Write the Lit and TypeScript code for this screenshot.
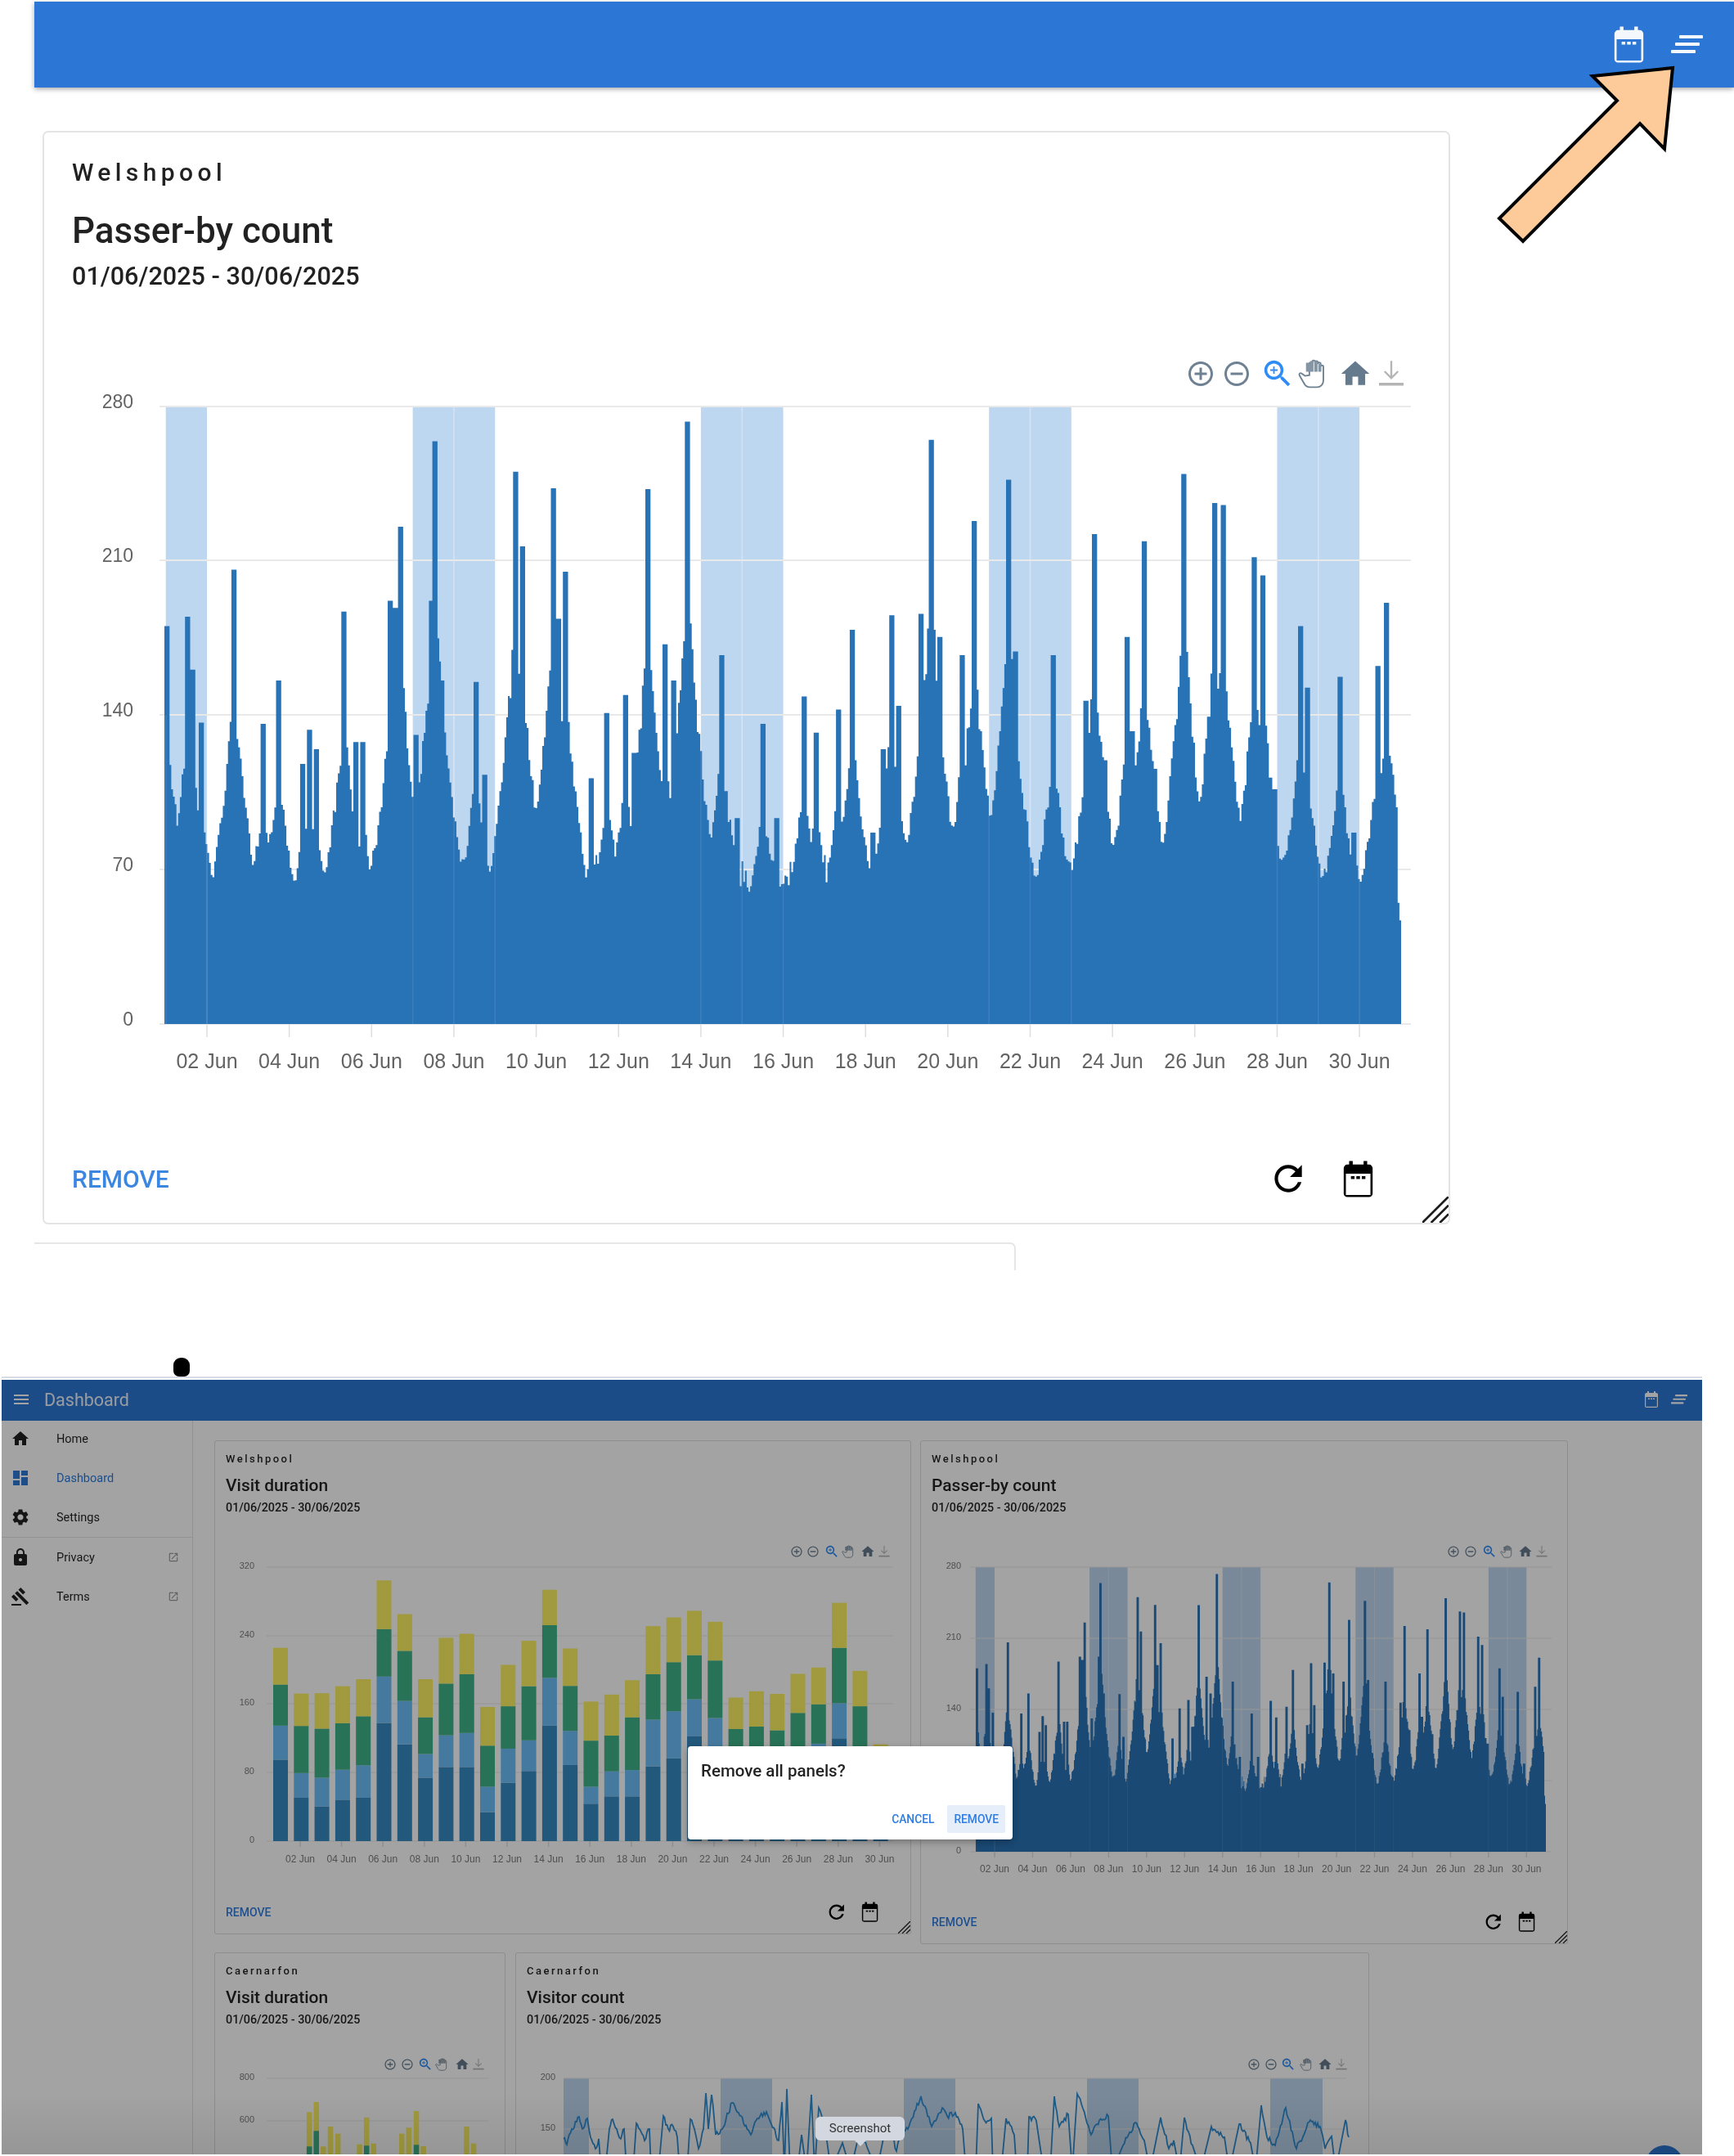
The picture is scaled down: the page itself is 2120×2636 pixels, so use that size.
import { LitElement, css, html, svg } from "lit";
import { customElement, property } from "lit/decorators.js";
import { classMap } from "lit/directives/class-map.js";

const ICONS: Record<string, string> = {
  menu: "M3 18h18v-2H3v2zm0-5h18v-2H3v2zm0-7v2h18V6H3z",
  home: "M10 20v-6h4v6h5v-8h3L12 3 2 12h3v8z",
  dashboard: "M3 13h8V3H3v10zm0 8h8v-6H3v6zm10 0h8V11h-8v10zm0-18v6h8V3h-8z",
  settings:
    "M19.14 12.94c.04-.3.06-.61.06-.94 0-.32-.02-.64-.07-.94l2.03-1.58c.18-.14.23-.41.12-.61l-1.92-3.32c-.12-.22-.37-.29-.59-.22l-2.39.96c-.5-.38-1.03-.7-1.62-.94l-.36-2.54c-.04-.24-.24-.41-.48-.41h-3.84c-.24 0-.43.17-.47.41l-.36 2.54c-.59.24-1.13.57-1.62.94l-2.39-.96c-.22-.08-.47 0-.59.22L2.74 8.87c-.12.21-.08.47.12.61l2.03 1.58c-.05.3-.09.63-.09.94s.02.64.07.94l-2.03 1.58c-.18.14-.23.41-.12.61l1.92 3.32c.12.22.37.29.59.22l2.39-.96c.5.38 1.03.7 1.62.94l.36 2.54c.05.24.24.41.48.41h3.84c.24 0 .44-.17.47-.41l.36-2.54c.59-.24 1.13-.56 1.62-.94l2.39.96c.22.08.47 0 .59-.22l1.92-3.32c.12-.22.07-.47-.12-.61l-2.01-1.58zM12 15.6c-1.98 0-3.6-1.62-3.6-3.6s1.62-3.6 3.6-3.6 3.6 1.62 3.6 3.6-1.62 3.6-3.6 3.6z",
  lock: "M18 8h-1V6c0-2.76-2.24-5-5-5S7 3.24 7 6v2H6c-1.1 0-2 .9-2 2v10c0 1.1.9 2 2 2h12c1.1 0 2-.9 2-2V10c0-1.1-.9-2-2-2zm-6 9c-1.1 0-2-.9-2-2s.9-2 2-2 2 .9 2 2-.9 2-2 2zm3.1-9H8.9V6c0-1.71 1.39-3.1 3.1-3.1 1.71 0 3.1 1.39 3.1 3.1v2z",
  gavel: "M1 21h12v2H1zM5.245 8.07l2.83-2.827 14.14 14.142-2.828 2.828zM12.317 1l5.657 5.656-2.83 2.83-5.654-5.66zM3.825 9.485l5.657 5.657-2.828 2.828-5.657-5.657z",
  external: "M19 19H5V5h7V3H5c-1.11 0-2 .9-2 2v14c0 1.1.89 2 2 2h14c1.1 0 2-.9 2-2v-7h-2v7zM14 3v2h3.59l-9.83 9.83 1.41 1.41L19 6.41V10h2V3h-7z",
  refresh:
    "M17.65 6.35C16.2 4.9 14.21 4 12 4c-4.42 0-7.99 3.58-7.99 8s3.57 8 7.99 8c3.73 0 6.84-2.55 7.73-6h-2.08c-.82 2.33-3.04 4-5.65 4-3.31 0-6-2.69-6-6s2.69-6 6-6c1.66 0 3.14.69 4.22 1.78L13 11h7V4l-2.35 2.35z",
  calendar:
    "M7 2v2H6a2 2 0 0 0-2 2v14a2 2 0 0 0 2 2h12a2 2 0 0 0 2-2V6a2 2 0 0 0-2-2h-1V2h-2v2H9V2H7zM5.2 9h13.6v11.8H5.2V9zM8 10.4V12h2v-1.6H8zm3 0V12h2v-1.6h-2zm3 0V12h2v-1.6h-2z",
  plus: "M13 7h-2v4H7v2h4v4h2v-4h4v-2h-4V7zm-1-5C6.48 2 2 6.48 2 12s4.48 10 10 10 10-4.48 10-10S17.52 2 12 2zm0 18c-4.41 0-8-3.59-8-8s3.59-8 8-8 8 3.59 8 8-3.59 8-8 8z",
  minus: "M7 11v2h10v-2H7zm5-9C6.48 2 2 6.48 2 12s4.48 10 10 10 10-4.48 10-10S17.52 2 12 2zm0 18c-4.41 0-8-3.59-8-8s3.59-8 8-8 8 3.59 8 8-3.59 8-8 8z",
  zoom: "M15.5 14h-.79l-.28-.27C15.41 12.59 16 11.11 16 9.5 16 5.91 13.09 3 9.5 3S3 5.91 3 9.5 5.91 16 9.5 16c1.61 0 3.09-.59 4.23-1.57l.27.28v.79l5 4.99L20.49 19l-4.99-5zm-6 0C7.01 14 5 11.99 5 9.5S7.01 5 9.5 5 14 7.01 14 9.5 11.99 14 9.5 14zM12 10h-2v2H9v-2H7V9h2V7h1v2h2v1z",
  hand: "M6.5 13.5 4 11.7c-.9-.6-2 .4-1.4 1.4l3.6 6.3c.8 1.4 2.2 2.1 3.8 2.1h5c2.5 0 4.5-2 4.5-4.5V7c0-1.3-1.9-1.3-1.9 0v-2c0-1.3-2-1.3-2 0v-1c0-1.3-2-1.3-2 0v-.5c0-1.3-2-1.3-2 0V5c0-1.3-2-1.3-2 0v8z",
};

function icon(name: string, size: number) {
  return html`<svg class="icon" width=${size} height=${size} viewBox="0 0 24 24"><path d=${ICONS[name]} /></svg>`;
}

// staggered three lines that open the panel list
function linesIcon(width: number, height: number) {
  return html`<svg class="icon" width=${width} height=${height} viewBox="0 0 39 23">
    <rect x="10" y="0" width="29" height="4" rx="1" />
    <rect x="5" y="9" width="30" height="4" rx="1" />
    <rect x="0" y="18" width="30" height="4" rx="1" />
  </svg>`;
}

function toolbar(xs: number[], y: number, s: number) {
  const at = (x: number, k = s) => `translate(${x} ${y}) scale(${k}) translate(-12 -12)`;
  return svg`
    <path transform=${at(xs[0])} fill="#6e8192" d=${ICONS.plus} />
    <path transform=${at(xs[1])} fill="#6e8192" d=${ICONS.minus} />
    <path transform=${at(xs[2], s * 1.2)} fill="#2f8cf5" d=${ICONS.zoom} />
    <g transform=${at(xs[3], s * 1.15)}>
      <path d=${ICONS.hand} fill="#fff" stroke="#6e8192" stroke-width="1.1" />
      <path d="M7.2 4.2h2.4v6.3H7.2zM10.1 3h2.4v7.5h-2.4zM13 3.2h2.4v7.3H13zM15.9 5h2.2v5.5h-2.2z" fill="#8496a6" />
    </g>
    <path transform=${at(xs[4], s * 1.15)} fill="#667a8d" d=${ICONS.home} />
    <g transform=${at(xs[5])} fill="none" stroke="#b5b5b5" stroke-width="1.6">
      <path d="M12 1.5V15.5M6.5 10l5.5 5.5 5.5-5.5" />
      <path d="M2 20.5h20" stroke-width="2.4" />
    </g>
  `;
}

function rng(seed: number) {
  let s = seed;
  return () => {
    s = (s * 16807) % 2147483647;
    return s / 2147483647;
  };
}

// peaks of the hourly passer-by series: hour position, value
const PEAK_XY = [
  [117, 735], [135, 722], [140, 795], [147, 868], [175, 657], [172, 895], [201, 870], [215, 810], [237, 925],
  [243, 878], [248, 905], [273, 715], [283, 895], [290, 895], [314, 700], [318, 710], [323, 598], [336, 885],
  [353, 480], [350, 700], [360, 810], [390, 812], [398, 940], [424, 522], [430, 625], [458, 545], [462, 725],
  [468, 660], [491, 945], [505, 855], [522, 830], [530, 910], [541, 546], [548, 900], [557, 760], [565, 810],
  [576, 453], [580, 790], [607, 775], [620, 1000], [643, 870], [655, 1000], [680, 832], [690, 882], [710, 850],
  [722, 740], [740, 1020], [750, 905], [757, 720], [763, 845], [783, 718], [792, 478], [800, 750], [820, 775],
  [830, 590], [838, 930], [860, 533], [866, 770], [900, 775], [928, 838], [937, 608], [945, 920], [965, 750],
  [970, 880], [980, 618], [990, 932], [1015, 525], [1043, 565], [1050, 568], [1078, 640], [1085, 665], [1095, 960],
  [1118, 735], [1125, 820], [1153, 805], [1165, 1020], [1187, 790], [1195, 703], [1203, 985],
];

const HOURS = 720;

function passerSeries() {
  const rand = rng(4211);
  const peaks = PEAK_XY.map(([x, y]) => ({
    at: Math.round(((x - 115) / 1093) * HOURS),
    v: ((1284 - y) / 852) * 280,
  }));
  const out: number[] = [];
  for (let h = 0; h < HOURS; h++) {
    let v = 60 + 18 * rand();
    for (const p of peaks) {
      const d = Math.abs(h - p.at);
      if (d <= 1) v = Math.max(v, p.v);
      v = Math.max(v, p.v * 0.92 * Math.exp(-d / 4.5), p.v * 0.76 * Math.exp(-d / 15));
    }
    const spike = peaks.some((p) => Math.abs(h - p.at) <= 1);
    out.push(spike ? v : v * (0.94 + 0.08 * rand()));
  }
  out[HOURS - 1] = 47;
  out[HOURS - 2] = 55;
  return out;
}

const PASSER = passerSeries();

interface ChartBox {
  ox: number;
  oy: number;
  w: number;
  h: number;
  gridL: number;
  gridR: number;
  gridW: number;
  labelX: number;
  labelSize: number;
  labelShift: number;
  ticks: [string, number][];
  tools: number[];
  toolY: number;
  toolScale: number;
}

interface DayAxis {
  first: number;
  step: number;
  labelY: number;
  labelSize: number;
  axisY: number;
  tickLen: number;
}

function grid(c: ChartBox) {
  return c.ticks.map(
    ([label, y]) => svg`
      <line x1=${c.gridL} x2=${c.gridR} y1=${y} y2=${y} stroke="#e9e9e9" stroke-width=${c.gridW} />
      <text class="axis" x=${c.labelX} y=${y - c.labelShift + c.labelSize * 0.36} text-anchor="end" font-size=${c.labelSize}>${label}</text>
    `
  );
}

function dayLabels(a: DayAxis) {
  const out = [];
  for (let i = 0; i < 15; i++) {
    const x = a.first + i * a.step;
    const label = `${String(2 + i * 2).padStart(2, "0")} Jun`;
    out.push(svg`
      <line x1=${x} x2=${x} y1=${a.axisY} y2=${a.axisY + a.tickLen} stroke="#dedede" stroke-width="1.5" />
      <text class="axis" x=${x} y=${a.labelY + a.labelSize * 0.36} text-anchor="middle" font-size=${a.labelSize}>${label}</text>
    `);
  }
  return out;
}

function passerChart(c: ChartBox, a: DayAxis, left: number, right: number, lineW: number) {
  const top = c.ticks[0][1];
  const bottom = c.ticks[c.ticks.length - 1][1];
  const day = a.step / 2;
  const bands = [-1, 5, 12, 19, 26].map((d, i) => {
    const start = a.first + d * day;
    const span = i === 0 ? day : day * 2;
    return { start, span };
  });
  const yOf = (v: number) => bottom - (v / 280) * (bottom - top);
  const dx = (right - left) / HOURS;
  let d = `M${left} ${bottom}`;
  PASSER.forEach((v, i) => {
    const x = left + i * dx;
    d += `L${x.toFixed(1)} ${yOf(v).toFixed(1)}L${(x + dx).toFixed(1)} ${yOf(v).toFixed(1)}`;
  });
  d += `L${right} ${bottom}Z`;
  return html`<svg class="chart" width=${c.w} height=${c.h} viewBox="${c.ox} ${c.oy} ${c.w} ${c.h}">
    ${bands.map(
      (b) => svg`<rect x=${b.start} y=${top} width=${b.span} height=${bottom - top} fill="#bed7f0" />
        ${b.span > day ? svg`<line x1=${b.start + day} x2=${b.start + day} y1=${top} y2=${bottom} stroke="#d6e3f0" stroke-width=${lineW} />` : null}`
    )}
    ${grid(c)}
    <path d=${d} fill="#2872b6" />
    ${bands.flatMap((b) =>
      [b.start, b.start + day, b.start + b.span].map(
        (x) => svg`<line x1=${x} x2=${x} y1=${bottom - (bottom - top) * 0.5} y2=${bottom} stroke="#fff" stroke-opacity=".1" stroke-width=${lineW} />`
      )
    )}
    ${dayLabels(a)} ${toolbar(c.tools, c.toolY, c.toolScale)}
  </svg>`;
}

// stack tops per day, read off the chart: dark, blue, green, yellow
const DURATION = [
  [1008, 906, 783, 673], [1122, 1048, 907, 810], [1148, 1062, 915, 809], [1128, 1038, 899, 788], [1122, 1025, 878, 767],
  [898, 759, 617, 471], [962, 832, 682, 572], [1062, 991, 881, 767], [1030, 935, 780, 643], [1030, 928, 752, 631],
  [1165, 1089, 966, 850], [1077, 975, 848, 724], [1042, 950, 788, 652], [906, 763, 605, 499], [1024, 922, 787, 675],
  [1140, 1089, 951, 834], [1118, 1043, 936, 813], [1118, 1039, 881, 770], [1028, 888, 752, 608], [1004, 863, 716, 582],
  [937, 827, 695, 562], [1000, 883, 711, 595], [1110, 1010, 916, 822], [1110, 1020, 909, 803], [1120, 1030, 920, 811],
  [1090, 990, 868, 751], [1100, 960, 842, 732], [944, 839, 673, 538], [1090, 990, 848, 742], [1215, 1150, 1080, 962],
];

const STACK = ["#358ac2", "#6cbef8", "#3eb288", "#fbf060"];

function durationChart(c: ChartBox, a: DayAxis) {
  const toY = (z: number) => 1740 + z / 2.45;
  const bottom = 2251;
  return html`<svg class="chart" width=${c.w} height=${c.h} viewBox="${c.ox} ${c.oy} ${c.w} ${c.h}">
    ${grid(c)}
    ${DURATION.map((tops, i) => {
      const x = 334 + i * 25.3;
      return STACK.map((fill, k) => {
        const y = toY(tops[k]);
        const below = k === 0 ? bottom : toY(tops[k - 1]);
        return svg`<rect x=${x} y=${y} width="18" height=${below - y} fill=${fill} />`;
      });
    })}
    ${dayLabels(a)} ${toolbar(c.tools, c.toolY, c.toolScale)}
  </svg>`;
}

// only the upper part of these two charts is in the picture
const SPARSE_BARS = [
  [235, 637, 763], [250, 600, 706], [265, 763, 0], [280, 690, 0], [296, 716, 0], [342, 755, 0], [357, 657, 760],
  [372, 752, 0], [432, 716, 0], [447, 694, 0], [463, 633, 757], [478, 762, 0], [570, 690, 0], [585, 752, 0],
];

function sparseChart(c: ChartBox) {
  return html`<svg class="chart" width=${c.w} height=${c.h} viewBox="${c.ox} ${c.oy} ${c.w} ${c.h}">
    ${grid(c)}
    ${SPARSE_BARS.map(([zx, yellow, green]) => {
      const x = 240 + zx / 1.742;
      return svg`
        <rect x=${x} y=${2370 + yellow / 3} width="6.5" height="120" fill="#fbf060" />
        ${green ? svg`<rect x=${x} y=${2370 + green / 3} width="6.5" height="120" fill="#3eb288" />` : null}
      `;
    })}
    ${toolbar(c.tools, c.toolY, c.toolScale)}
  </svg>`;
}

const VISITOR_LINE = [
  [689, 2615], [693, 2622], [699, 2603], [708, 2588], [712, 2603], [718, 2590], [722, 2613], [728, 2627], [732, 2615],
  [735, 2634], [740, 2634], [745, 2603], [749, 2591], [754, 2603], [759, 2615], [763, 2603], [766, 2634], [774, 2634],
  [778, 2596], [782, 2603], [788, 2617], [794, 2603], [796, 2634], [805, 2634], [811, 2587], [817, 2603], [823, 2600],
  [828, 2613], [831, 2634], [840, 2634], [844, 2591], [849, 2603], [854, 2627], [860, 2603], [863, 2559], [866, 2603],
  [870, 2561], [875, 2610], [883, 2603], [895, 2571], [906, 2587], [918, 2610], [926, 2590], [937, 2582], [943, 2597],
  [952, 2617], [956, 2570], [959, 2634], [962, 2554], [966, 2634], [975, 2634], [980, 2610], [986, 2634], [992, 2561],
  [996, 2634], [1001, 2577], [1009, 2603], [1016, 2634], [1030, 2620], [1040, 2634], [1050, 2610], [1060, 2625],
  [1072, 2634], [1085, 2590], [1096, 2630], [1102, 2603], [1110, 2603], [1126, 2563], [1139, 2600], [1152, 2577],
  [1158, 2587], [1168, 2583], [1177, 2603], [1181, 2634], [1193, 2634], [1196, 2572], [1204, 2593], [1212, 2590],
  [1214, 2634], [1224, 2634], [1230, 2590], [1240, 2610], [1243, 2634], [1256, 2634], [1258, 2588], [1267, 2593],
  [1276, 2634], [1284, 2634], [1289, 2563], [1295, 2600], [1306, 2585], [1311, 2634], [1317, 2560], [1324, 2578],
  [1334, 2610], [1341, 2597], [1355, 2587], [1360, 2634], [1373, 2623], [1388, 2595], [1399, 2617], [1406, 2634],
  [1419, 2589], [1429, 2627], [1435, 2617], [1442, 2634], [1448, 2589], [1458, 2623], [1468, 2634], [1481, 2600],
  [1497, 2613], [1503, 2634], [1515, 2597], [1529, 2620], [1535, 2634], [1542, 2574], [1549, 2613], [1559, 2623],
  [1572, 2577], [1585, 2627], [1602, 2592], [1614, 2600], [1620, 2627], [1628, 2612], [1633, 2634], [1645, 2592], [1649, 2613],
];

function visitorChart(c: ChartBox) {
  const rand = rng(977);
  const bands = [[689, 31], [881, 63], [1105, 63], [1329, 63], [1553, 64]];
  const top = c.ticks[0][1];
  const points: string[] = [];
  VISITOR_LINE.forEach(([x, y], i) => {
    const next = VISITOR_LINE[i + 1];
    const drop = y >= 2634 ? 20 : 0;
    points.push(`${x},${y + drop}`);
    if (next && next[1] < 2634 && y < 2634) {
      // a noisy hourly line between the values read off the chart
      const parts = Math.max(1, Math.round((next[0] - x) / 1.6));
      for (let p = 1; p < parts; p++) {
        const t = p / parts;
        const wobble = (rand() - 0.5) * 7;
        points.push(`${(x + (next[0] - x) * t).toFixed(1)},${(y + (next[1] - y) * t + wobble).toFixed(1)}`);
      }
    }
  });
  return html`<svg class="chart" width=${c.w} height=${c.h} viewBox="${c.ox} ${c.oy} ${c.w} ${c.h}">
    ${bands.map(([x, w]) => svg`<rect x=${x} y=${top} width=${w} height="200" fill="#bed7f0" />`)}
    ${grid(c)}
    <polyline points=${points.join(" ")} fill="none" stroke="#2f8fd6" stroke-width="1.8" />
    ${toolbar(c.tools, c.toolY, c.toolScale)}
  </svg>`;
}

const MAIN_BOX: ChartBox = {
  ox: 54, oy: 400, w: 1716, h: 920,
  gridL: 195, gridR: 1725, gridW: 2,
  labelX: 163, labelSize: 23, labelShift: 6,
  ticks: [["280", 497], ["210", 685], ["140", 874], ["70", 1063], ["0", 1252]],
  tools: [1468, 1512, 1562, 1605, 1657, 1701], toolY: 457, toolScale: 1.5,
};
const MAIN_AXIS: DayAxis = { first: 253, step: 100.65, labelY: 1297, labelSize: 25, axisY: 1252, tickLen: 16 };

const P1_BOX: ChartBox = {
  ox: 263, oy: 1860, w: 850, h: 430,
  gridL: 326, gridR: 1092, gridW: 1,
  labelX: 311, labelSize: 11, labelShift: 2,
  ticks: [["320", 1916], ["240", 2000], ["160", 2083], ["80", 2167], ["0", 2251]],
  tools: [974, 994, 1017, 1037, 1061, 1081], toolY: 1897, toolScale: 0.66,
};
const P1_AXIS: DayAxis = { first: 367, step: 50.6, labelY: 2273, labelSize: 12, axisY: 2251, tickLen: 7 };

const P2_BOX: ChartBox = {
  ox: 1126, oy: 1860, w: 790, h: 440,
  gridL: 1186, gridR: 1897, gridW: 1,
  labelX: 1175, labelSize: 11, labelShift: 2,
  ticks: [["280", 1916], ["210", 2003], ["140", 2090], ["70", 2177], ["0", 2264]],
  tools: [1777, 1798, 1821, 1842, 1865, 1885], toolY: 1897, toolScale: 0.66,
};
const P2_AXIS: DayAxis = { first: 1216, step: 46.45, labelY: 2285, labelSize: 12, axisY: 2264, tickLen: 7 };

const P3_BOX: ChartBox = {
  ox: 263, oy: 2486, w: 354, h: 200,
  gridL: 326, gridR: 597, gridW: 1,
  labelX: 311, labelSize: 11, labelShift: 2,
  ticks: [["800", 2541], ["600", 2593]],
  tools: [477, 498, 520, 540, 565, 585], toolY: 2524, toolScale: 0.66,
};

const P4_BOX: ChartBox = {
  ox: 631, oy: 2486, w: 1042, h: 200,
  gridL: 689, gridR: 1646, gridW: 1,
  labelX: 679, labelSize: 11, labelShift: 2,
  ticks: [["200", 2541], ["150", 2603]],
  tools: [1533, 1554, 1575, 1597, 1620, 1640], toolY: 2524, toolScale: 0.66,
};

@customElement("dash-panel")
export class DashPanel extends LitElement {
  static styles = css`
    :host {
      display: block;
    }
    .panel {
      position: relative;
      display: flex;
      flex-direction: column;
      box-sizing: border-box;
      height: 100%;
      background: #fff;
      border: 1px solid #dcdcdc;
      border-radius: 3px;
      color: rgba(0, 0, 0, 0.87);
      overflow: hidden;
    }
    .place {
      font-weight: 500;
      font-size: 13px;
      line-height: 20px;
      letter-spacing: 2.5px;
      margin: 12px 13px 0;
    }
    .title {
      font-weight: 500;
      font-size: 21px;
      line-height: 26px;
      margin: 9px 13px 0;
    }
    .range {
      font-weight: 500;
      font-size: 14.3px;
      line-height: 18px;
      margin: 5px 13px 0;
    }
    .body {
      margin-top: 8px;
    }
    .footer {
      display: flex;
      align-items: center;
      margin-top: auto;
      height: 30px;
      padding: 0 35px 11px 13px;
      color: #000;
    }
    .remove {
      font-weight: 500;
      font-size: 14px;
      color: #2f7de1;
      margin-right: auto;
    }
    .footer .icon {
      margin-left: 12px;
    }
    .handle {
      position: absolute;
      right: 0;
      bottom: 0;
      width: 15px;
      height: 15px;
    }
    .large {
      border-width: 2px;
      border-color: #e4e4e4;
      border-radius: 7px;
    }
    .large .place {
      font-size: 30px;
      line-height: 40px;
      letter-spacing: 5.4px;
      margin: 29px 34px 0;
    }
    .large .title {
      font-size: 44px;
      line-height: 52px;
      margin: 25px 34px 0;
    }
    .large .range {
      font-size: 30.6px;
      line-height: 36px;
      margin: 12px 34px 0;
    }
    .large .body {
      margin-top: 44px;
    }
    .large .footer {
      height: 60px;
      padding: 0 84px 24px 34px;
    }
    .large .remove {
      font-size: 30px;
      color: #3b86e0;
    }
    .large .footer .icon {
      margin-left: 34px;
    }
    .large .handle {
      width: 32px;
      height: 32px;
    }
    .icon {
      display: block;
      fill: currentColor;
    }
    .chart {
      display: block;
    }
  `;

  @property() place = "";
  @property() heading = "";
  @property({ type: Boolean }) large = false;
  @property({ type: Boolean }) footer = false;

  render() {
    const k = this.large ? 1 : 0.55;
    return html`
      <div class="panel ${classMap({ large: this.large })}">
        <div class="place">${this.place}</div>
        <div class="title">${this.heading}</div>
        <div class="range">01/06/2025 - 30/06/2025</div>
        <div class="body"><slot></slot></div>
        ${this.footer
          ? html`<div class="footer">
                <span class="remove">REMOVE</span>
                ${icon("refresh", 50 * k)} ${icon("calendar", 53 * k)}
              </div>
              <svg class="handle" viewBox="0 0 24 24" stroke="#1c1c1c" stroke-width="2">
                <path d="M0 24 24 0M8 24 24 8M16 24l8-8" />
              </svg>`
          : null}
      </div>
    `;
  }
}

@customElement("app-root")
export class AppRoot extends LitElement {
  static styles = css`
    :host {
      display: block;
      position: relative;
      width: 2120px;
      height: 2636px;
      overflow: hidden;
      background: #fff;
      font-family: Roboto, "Liberation Sans", sans-serif;
      filter: blur(0.55px);
    }
    .icon {
      display: block;
      fill: currentColor;
    }
    .axis {
      font-family: "Liberation Sans", Arial, sans-serif;
      fill: #636363;
    }
    .appbar {
      display: flex;
      align-items: center;
      justify-content: flex-end;
      gap: 25px;
      box-sizing: border-box;
      height: 105px;
      margin: 2px 0 0 42px;
      padding-right: 38px;
      background: #2c77d5;
      color: #f4f8fd;
      box-shadow: 0 2px 6px rgba(0, 0, 0, 0.35);
    }
    .card {
      width: 1721px;
      height: 1337px;
      margin: 53px 0 0 52px;
    }
    .next-card {
      box-sizing: border-box;
      width: 1200px;
      height: 34px;
      margin: 22px 0 0 42px;
      border-top: 2px solid #e6e6e6;
      border-right: 2px solid #e6e6e6;
      border-top-right-radius: 7px;
    }
    .dot {
      width: 20px;
      height: 23px;
      margin: 107px 0 0 212px;
      background: #000;
      border-radius: 9px 9px 7px 7px;
    }
    .shot {
      position: relative;
      display: flex;
      flex-direction: column;
      box-sizing: border-box;
      width: 2079px;
      height: 951px;
      margin-left: 2px;
      padding-top: 2px;
      background: #fff;
      overflow: hidden;
      color: rgba(0, 0, 0, 0.87);
      border-top: 2px solid #d8dce4;
      filter: blur(0.35px);
    }
    .shot .axis {
      fill: #7c7c7c;
    }
    .shot-bar {
      display: flex;
      align-items: center;
      flex: none;
      box-sizing: border-box;
      height: 50px;
      padding: 0 18px 2px 12px;
      background: #2c77d5;
      color: #fff;
    }
    .shot-title {
      margin-left: 16px;
      margin-right: auto;
      font-size: 21.5px;
      color: #eef4fb;
    }
    .shot-bar .cal {
      margin-right: 12px;
    }
    .shot-body {
      display: flex;
      flex: 1;
      min-height: 0;
    }
    .side {
      flex: none;
      box-sizing: border-box;
      width: 234px;
      padding-top: 0;
      border-right: 1px solid #e2e2e2;
    }
    .nav-group {
      margin-top: -2px;
    }
    .nav-row {
      display: flex;
      align-items: center;
      gap: 32px;
      height: 48px;
      padding: 0 16px 0 11px;
      font-size: 14.5px;
    }
    .nav-row.on {
      color: #2d79d8;
    }
    .nav-row .ext {
      margin-left: auto;
      color: #9a9a9a;
    }
    .side hr {
      margin: 0;
      border: none;
      border-top: 1px solid #e6e6e6;
    }
    .panels {
      display: flex;
      flex-direction: column;
      gap: 10px;
      padding: 24px 0 0 26px;
    }
    .panel-row {
      display: flex;
      align-items: flex-start;
      gap: 10px;
    }
    .p1 {
      width: 852px;
      height: 604px;
    }
    .p2 {
      width: 792px;
      height: 616px;
      margin-left: 1px;
    }
    .p3 {
      width: 356px;
      height: 600px;
    }
    .p4 {
      width: 1044px;
      height: 600px;
      margin-left: 2px;
    }
    .fab {
      position: absolute;
      left: 2010px;
      top: 938px;
      width: 46px;
      height: 46px;
      border-radius: 50%;
      background: #2c77d5;
    }
    .scrim {
      position: absolute;
      inset: 2px 0 0 0;
      background: linear-gradient(rgba(0, 0, 0, 0.36) 92%, rgba(0, 0, 0, 0.41));
    }
    .dialog {
      position: absolute;
      left: 839px;
      top: 450px;
      box-sizing: border-box;
      width: 397px;
      height: 114px;
      padding: 16px;
      background: #fff;
      border-radius: 4px;
      box-shadow: 0 3px 10px rgba(0, 0, 0, 0.3);
    }
    .dialog-title {
      font-size: 20.5px;
      font-weight: 500;
      line-height: 28px;
    }
    .dialog-actions {
      position: absolute;
      right: 9px;
      bottom: 8px;
      display: flex;
      align-items: center;
      gap: 8px;
      font-size: 13.8px;
      font-weight: 500;
      color: #2f7de1;
    }
    .dialog-actions span {
      padding: 9px 8px;
      line-height: 16px;
      border-radius: 2px;
    }
    .dialog-actions .hot {
      background: #e5eef9;
    }
    .tip {
      position: absolute;
      left: 995px;
      top: 903px;
      width: 109px;
      height: 29px;
      font-size: 15px;
      line-height: 29px;
      text-align: center;
      background: #d3d8e0;
      color: #333;
      border-radius: 6px;
    }
    .tip::after {
      content: "";
      position: absolute;
      left: 48px;
      top: 29px;
      border: 7px solid transparent;
      border-top-color: #d3d8e0;
      border-bottom: none;
    }
    .arrow {
      position: absolute;
      left: 0;
      top: 0;
      pointer-events: none;
    }
  `;

  render() {
    return html`
      <header class="appbar">${icon("calendar", 53)} ${linesIcon(39, 23)}</header>
      <dash-panel class="card" large footer place="Welshpool" heading="Passer-by count">
        ${passerChart(MAIN_BOX, MAIN_AXIS, 201, 1713, 1.5)}
      </dash-panel>
      <div class="next-card"></div>
      <div class="dot"></div>

      <section class="shot">
        <div class="shot-bar">
          ${icon("menu", 24)}
          <span class="shot-title">Dashboard</span>
          <span class="cal">${icon("calendar", 24)}</span>
          ${linesIcon(20, 12)}
        </div>
        <div class="shot-body">
          <nav class="side">
            <div class="nav-group">
              <div class="nav-row">${icon("home", 24)}Home</div>
              <div class="nav-row on">${icon("dashboard", 24)}Dashboard</div>
              <div class="nav-row">${icon("settings", 24)}Settings</div>
              <hr />
              <div class="nav-row">${icon("lock", 24)}Privacy<span class="ext">${icon("external", 14)}</span></div>
              <div class="nav-row">${icon("gavel", 24)}Terms<span class="ext">${icon("external", 14)}</span></div>
            </div>
          </nav>
          <main class="panels">
            <div class="panel-row">
              <dash-panel class="p1" footer place="Welshpool" heading="Visit duration">
                ${durationChart(P1_BOX, P1_AXIS)}
              </dash-panel>
              <dash-panel class="p2" footer place="Welshpool" heading="Passer-by count">
                ${passerChart(P2_BOX, P2_AXIS, 1193, 1890, 1)}
              </dash-panel>
            </div>
            <div class="panel-row">
              <dash-panel class="p3" place="Caernarfon" heading="Visit duration">${sparseChart(P3_BOX)}</dash-panel>
              <dash-panel class="p4" place="Caernarfon" heading="Visitor count">${visitorChart(P4_BOX)}</dash-panel>
            </div>
          </main>
        </div>
        <div class="fab"></div>
        <div class="scrim"></div>
        <div class="dialog">
          <div class="dialog-title">Remove all panels?</div>
          <div class="dialog-actions"><span>CANCEL</span><span class="hot">REMOVE</span></div>
        </div>
        <div class="tip">Screenshot</div>
      </section>

      <svg class="arrow" width="2120" height="320" viewBox="0 0 2120 320">
        <path
          d="M2045 83 1947 93 1977 123 1833 267 1862 295 2005 151 2035 182Z"
          fill="#fdcb99"
          stroke="#000"
          stroke-width="4"
        />
      </svg>
    `;
  }
}
